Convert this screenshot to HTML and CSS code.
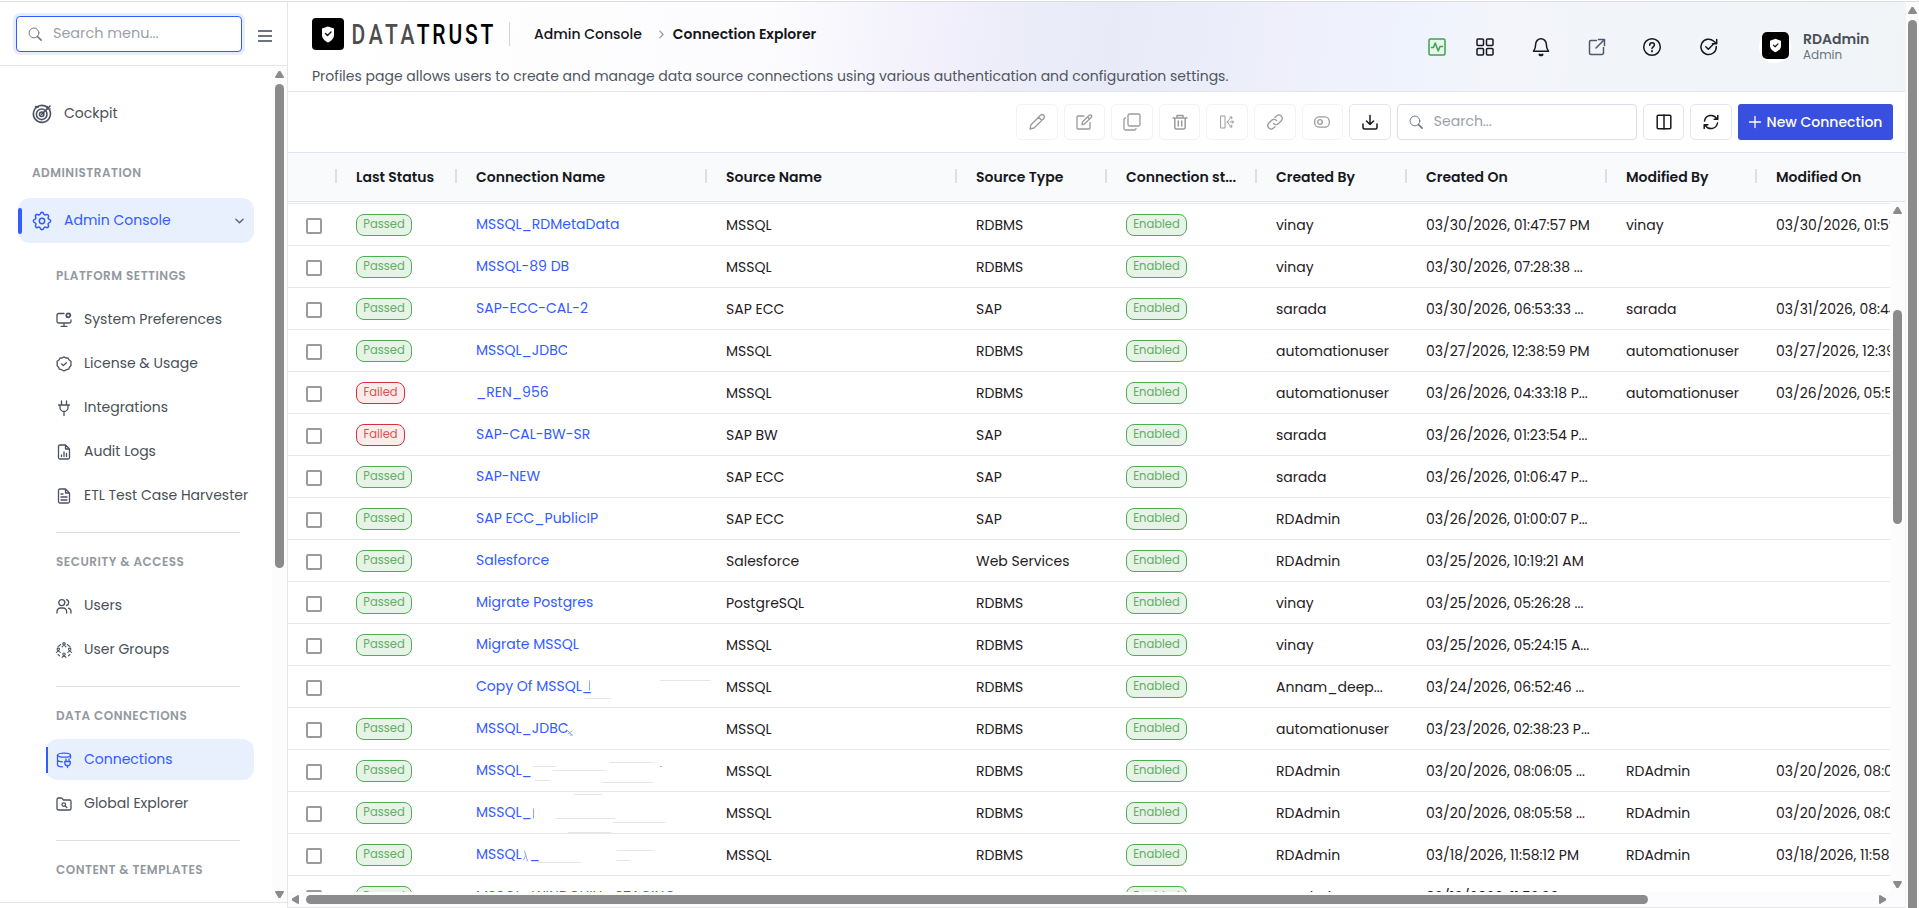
FILE: index.html
```html
<!DOCTYPE html>
<html lang="en">
<head>
	<meta charset="utf-8">
	<title>Connection Explorer</title>
	<link rel="stylesheet" href="styles.css">
</head>
<body>
<div class="app">

	<aside class="sidebar">
		<div class="menu_search">
			<div class="search_box focused">
				<svg class="ico16" viewBox="0 0 16 16"><circle cx="6.8" cy="6.8" r="5.6"/><path d="M10.8 10.8L15 15" stroke-width="1.8"/></svg>
				<span class="ph">Search menu...</span>
			</div>
			<div class="burger"><i></i><i></i><i></i></div>
		</div>

		<div class="side_body">
			<nav class="menu">
				<a class="item top cockpit">
					<svg class="ico20" viewBox="0 0 20 20"><path d="M15.2 3.2A8.5 8.5 0 1 0 17.6 6.2" stroke-width="1.6"/><path d="M3.5 2.5L6 3.3" stroke-width="1.6"/><circle cx="9.7" cy="10.3" r="5.3"/><circle cx="9.7" cy="10.3" r="2.2"/><path d="M9.7 10.3L18 2M15 5V2.5M15 5h3"/></svg>
					<span>Cockpit</span>
				</a>
				<h4 class="caption">ADMINISTRATION</h4>
				<a class="item top active">
					<svg class="ico20" viewBox="1.5 1.5 21 21"><path d="M10.3 4.3c.4-1.8 3-1.8 3.4 0a1.7 1.7 0 0 0 2.6 1.1c1.5-.9 3.3.8 2.4 2.4a1.7 1.7 0 0 0 1 2.5c1.8.4 1.8 3 0 3.4a1.7 1.7 0 0 0-1 2.6c.9 1.5-.8 3.3-2.4 2.4a1.7 1.7 0 0 0-2.6 1c-.4 1.800-3 1.800-3.400 0a1.700 1.700 0 0 0-2.600-1c-1.500.9-3.300-.8-2.400-2.400a1.700 1.700 0 0 0-1-2.600c-1.800-.4-1.800-3 0-3.400a1.700 1.700 0 0 0 1-2.600c-.9-1.500.8-3.300 2.400-2.400 1 .6 2.300.1 2.600-1z"/><circle cx="12" cy="12" r="2.800"/></svg>
					<span>Admin Console</span>
					<svg class="chev" viewBox="0 0 10 6"><path d="M1 1l4 4 4-4"/></svg>
				</a>

				<h4 class="group">PLATFORM SETTINGS</h4>
				<a class="item">
					<svg class="ico16" viewBox="0 0 16 16"><path d="M8 1.500H2.500a1.500 1.500 0 0 0-1.500 1.500v6.500A1.500 1.500 0 0 0 2.500 11h11a1.500 1.500 0 0 0 1.500-1.500V8M8 11v3M5 14.300h6"/><circle cx="12.300" cy="3.300" r="2" stroke-width="1.800"/></svg>
					<span>System Preferences</span>
				</a>
				<a class="item">
					<svg class="ico16" viewBox="0 0 16 16"><path d="M8 .9l1.900 1.100 2.200.1 1 1.900 1.900 1.200-.1 2.200.1 2.200-1.500 1.600-.8 2-2.200.5L8 15l-2.400-1.300-2.200-.5-.8-2L1.100 9.600 1.200 7.400 1.100 5.200 3 4l1-1.900 2.100-.1z"/><path d="M5.700 8l1.600 1.600 3-2.900"/></svg>
					<span>License &amp; Usage</span>
				</a>
				<a class="item">
					<svg class="ico16" viewBox="0 0 16 16"><path d="M5.500 1v4M10.500 1v4M2.500 5h11M4 5v2.500a4 4 0 0 0 8 0V5M8 11.500V15.500"/></svg>
					<span>Integrations</span>
				</a>
				<a class="item">
					<svg class="ico16" viewBox="0 0 16 16"><path d="M9.500 1H4a1.500 1.500 0 0 0-1.500 1.500v11A1.500 1.500 0 0 0 4 15h8a1.500 1.500 0 0 0 1.500-1.500V5zM9.500 1v4h4M5.500 12.500v-1.500M8 12.500V8M10.500 12.500v-3"/></svg>
					<span>Audit Logs</span>
				</a>
				<a class="item">
					<svg class="ico16" viewBox="0 0 16 16"><path d="M9.500 1H4a1.500 1.500 0 0 0-1.500 1.500v11A1.500 1.500 0 0 0 4 15h8a1.500 1.500 0 0 0 1.500-1.500V5zM9.500 1v4h4M5 6h2M5 9h6M5 12h6"/></svg>
					<span>ETL Test Case Harvester</span>
				</a>
				<hr>

				<h4 class="group">SECURITY &amp; ACCESS</h4>
				<a class="item">
					<svg class="ico16" viewBox="0 0 16 16"><circle cx="5.800" cy="4.600" r="3"/><path d="M1 15v-1.500a3.500 3.500 0 0 1 3.500-3.500h2.600a3.500 3.500 0 0 1 3.500 3.500V15M10.500 1.700a3 3 0 0 1 0 5.800M15 15v-1.500a3.500 3.500 0 0 0-2.500-3.300"/></svg>
					<span>Users</span>
				</a>
				<a class="item">
					<svg class="ico16 thin" viewBox="0 0 16 16"><path d="M3.200 3.800l1.400-1.300M11.400 2.500l1.400 1.300M1.800 5l.5-.8M14.200 5l-.5-.8M2.200 12.500l1.400 1.400M13.800 12.500l-1.400 1.400"/><circle cx="8" cy="1.800" r="1.200"/><circle cx="2.300" cy="7.300" r="1.200"/><circle cx="13.700" cy="7.300" r="1.200"/><circle cx="8" cy="12.200" r="1.200"/><path d="M6 4.800q2-2.600 4 0M.3 10.500q2-2.600 4 0M11.700 10.500q2-2.600 4 0M6 15.400q2-2.600 4 0"/></svg>
					<span>User Groups</span>
				</a>
				<hr>

				<h4 class="group">DATA CONNECTIONS</h4>
				<a class="item active">
					<svg class="ico16" viewBox="0 0 16 16"><ellipse cx="8" cy="3.200" rx="6.500" ry="2"/><path d="M1.500 3.200v9.500c0 1.200 2 2 5 2.100M1.500 8c.5 1.200 2.500 1.800 5 1.900M14.500 3.200V6M10 7v2.500M13 7v2.500M8.800 9.500h5.500v1.500a2.700 2.700 0 0 1-5.500 0zM11.500 13.500v2"/></svg>
					<span>Connections</span>
				</a>
				<a class="item">
					<svg class="ico16" viewBox="0 0 16 16"><path d="M1 3.500A1.500 1.500 0 0 1 2.500 2H5.500l2 2h6A1.500 1.500 0 0 1 15 5.500v7A1.500 1.500 0 0 1 13.500 14h-11A1.500 1.500 0 0 1 1 12.500z"/><circle cx="7.800" cy="8.600" r="1.800"/><path d="M9.200 10l1.600 1.500"/></svg>
					<span>Global Explorer</span>
				</a>
				<hr>
				<h4 class="group">CONTENT &amp; TEMPLATES</h4>
			</nav>
			<div class="vbar side_bar"><b class="up"></b><i></i><b class="down"></b></div>
		</div>
	</aside>

	<main class="main">
		<header class="header">
			<div class="head_left">
				<div class="brand_row">
					<svg class="logo" viewBox="0 0 32 32"><rect width="32" height="32" rx="4"/><path class="w" d="M16 8.500l6 2v6.500c0 3.500-3 6-6 7.500-3-1.500-6-4-6-7.500v-6.500z"/><path class="tick" d="M13.500 15.500l2 2 3.500-3.500"/></svg>
					<svg class="wordmark" viewBox="0 0 140 32"><g transform="scale(.75 1)"><text x="-2" y="26" textLength="84" class="wm_data">DATA</text><text x="85" y="26" textLength="102" class="wm_trust">TRUST</text></g></svg>
					<span class="vline"></span>
					<span class="crumb">Admin Console</span>
					<svg class="sep" viewBox="0 0 6 10"><path d="M1 1l4 4-4 4"/></svg>
					<span class="crumb current">Connection Explorer</span>
				</div>
				<p class="desc">Profiles page allows users to create and manage data source connections using various authentication and configuration settings.</p>
			</div>
			<div class="head_icons">
				<svg class="h_green" viewBox="0 0 18 18"><rect x="1" y="1" width="16" height="16" rx="1.500"/><path d="M3.500 9.500h2l1.700-4.500 3 8 1.800-4.500h2.500"/></svg>
				<svg class="h_grid" viewBox="0 0 18 18"><rect x="1" y="1" width="6.500" height="6.500" rx="1"/><rect x="10.500" y="1" width="6.500" height="6.500" rx="1"/><rect x="1" y="10.500" width="6.500" height="6.500" rx="1"/><rect x="10.500" y="10.500" width="6.500" height="6.500" rx="1"/></svg>
				<svg class="h_bell" viewBox="0 0 18 18"><path d="M9 .8a5.300 5.300 0 0 0-5.300 5.300c0 4-.9 5.700-2.200 7.200h15c-1.300-1.500-2.200-3.200-2.200-7.200A5.300 5.300 0 0 0 9 .8z"/><path d="M7.500 16.600q1.500 1.200 3 0" stroke-width="2"/></svg>
				<svg class="h_ext" viewBox="0 0 18 18"><path d="M8.500 2.500H3A1.500 1.500 0 0 0 1.500 4v11A1.500 1.500 0 0 0 3 16.500h11a1.500 1.500 0 0 0 1.500-1.500V9.500M10.500 1.500h6v6M16.500 1.500L8 10"/></svg>
				<svg class="h_help" viewBox="0 0 18 18"><circle cx="9" cy="9" r="8.300"/><path d="M6.700 7.200c0-3.200 4.700-3 4.700-.2 0 1.700-2.400 1.900-2.400 3.600"/><path d="M9 12.800v.6" stroke-width="1.800"/></svg>
				<svg class="h_check" viewBox="0 0 18 18"><path d="M16.300 8.500A7.700 7.700 0 1 1 13.800 3.200L16.500 5.500M16.700 1.500v4.200h-4.200M5.800 8.800l2.500 2.500 5-5"/></svg>
				<div class="avatar"><svg viewBox="0 0 32 32"><rect width="32" height="32" rx="6"/><path class="w" d="M16 8l6.500 2.500v6c0 3.500-3.200 6-6.500 7.500-3.200-1.500-6.500-4-6.500-7.500v-6z"/><path class="tick" d="M13.500 15.500l2 2 3.500-3.500"/></svg></div>
				<div class="user"><b>RDAdmin</b><small>Admin</small></div>
			</div>
		</header>

		<div class="toolbar">
			<div class="btn off"><svg class="ico16" viewBox="0 0 16 16"><path d="M1 15l1-4.200L11.500 1.300a1.800 1.800 0 0 1 3.200 3.200L5 14zM9.800 3.200l3 3"/></svg></div>
			<div class="btn off"><svg class="ico16" viewBox="0 0 16 16"><path d="M8 2H2a1 1 0 0 0-1 1v11a1 1 0 0 0 1 1h11a1 1 0 0 0 1-1V8.500M6 10.500l.6-2.800L13.300 1.200a1.300 1.300 0 0 1 2 2L8.700 9.800zM11.500 3l1.800 1.800"/></svg></div>
			<div class="btn off"><svg class="ico18" viewBox="0 0 18 18"><rect x="5" y="1" width="12" height="12" rx="1.500"/><path d="M2.500 5A1.500 1.500 0 0 0 1 6.500v9A1.500 1.500 0 0 0 2.500 17h9a1.500 1.500 0 0 0 1.500-1.500"/></svg></div>
			<div class="btn off bold"><svg class="ico16" viewBox="0 0 16 16"><path d="M1 4h14M2.800 4v9.500A1.500 1.500 0 0 0 4.300 15h7.400a1.500 1.500 0 0 0 1.500-1.500V4M5 4V1.500h6V4M6.300 7v5M9.700 7v5"/></svg></div>
			<div class="btn off light"><svg class="ico16" viewBox="0 0 16 16"><path d="M2 2h4v12H2zM8 8h1.500M11 8h3.500M8.500 7.500L12 3.500M8.500 8.500L12 12.500M10.800 3.200l2-.4v2M10.800 12.800l2 .4v-2M13 6.500L14.500 8 13 9.500"/></svg></div>
			<div class="btn off"><svg class="ico16" viewBox="0 0 16 16"><path d="M6.500 9.500a3.300 3.300 0 0 0 4.800.2l3-3a3.400 3.400 0 0 0-4.800-4.800L8 3.300M9.500 6.500a3.300 3.300 0 0 0-4.800-.2l-3 3a3.400 3.400 0 0 0 4.800 4.800L8 12.700"/></svg></div>
			<div class="btn off"><svg class="ico16" viewBox="0 0 16 16"><rect x=".7" y="2.800" width="14.600" height="10.400" rx="4.500"/><circle cx="6" cy="8" r="2.300"/></svg></div>
			<div class="btn bold"><svg class="ico16" viewBox="0 0 16 16"><path d="M1 10v3.500A1.500 1.500 0 0 0 2.500 15h11a1.500 1.500 0 0 0 1.500-1.500V10M8 1.500v9M4.500 7L8 10.500 11.500 7"/></svg></div>
			<div class="search_box grid_search">
				<svg class="ico16" viewBox="0 0 16 16"><circle cx="6.800" cy="6.800" r="5.600"/><path d="M10.800 10.800L15 15" stroke-width="1.800"/></svg>
				<span class="ph">Search...</span>
			</div>
			<div class="btn bold"><svg class="ico16" viewBox="0 0 16 16"><rect x="1.200" y="1.200" width="13.600" height="13.600" rx="1"/><path d="M8 1v14"/></svg></div>
			<div class="btn bold"><svg class="ico16" viewBox="0 0 16 16"><path d="M1.500 7A6.600 6.600 0 0 1 13.700 4.700M14.800 1.500v3.700h-3.700M14.500 9A6.600 6.600 0 0 1 2.300 11.300M1.200 14.500v-3.700h3.700"/></svg></div>
			<div class="new_btn"><svg viewBox="0 0 12 12"><path d="M6 .5v11M.5 6h11"/></svg><span>New Connection</span></div>
		</div>

		<section class="grid">
			<div class="row grid_head">
				<div></div><div>Last Status</div><div>Connection Name</div><div>Source Name</div><div>Source Type</div><div>Connection st...</div><div>Created By</div><div>Created On</div><div>Modified By</div><div>Modified On</div>
			</div>
			<div class="grid_mid">
				<div class="rows" id="rows"></div>
				<div class="vbar grid_bar"><b class="up"></b><i></i><b class="down"></b></div>
			</div>
			<div class="hbar"><b class="left"></b><i></i><b class="right"></b></div>
		</section>
	</main>

	<div class="vbar page_bar"><b class="up"></b><i></i></div>
</div>
<script src="script.js"></script>
</body>
</html>
```
FILE: styles.css
```css
* {
	box-sizing: border-box;
}

body {
	margin: 0;
	background: #fff;
	font-family: Poppins, Inter, sans-serif;
	font-size: 14px;
	color: #1f2024;
	overflow: hidden;
}

svg {
	display: block;
	flex: none;
	fill: none;
	stroke: currentColor;
	stroke-width: 1.3;
	stroke-linecap: round;
	stroke-linejoin: round;
	overflow: visible;
}

.ico16 { width: 16px; height: 16px; }
.ico18 { width: 18px; height: 18px; }
.ico20 { width: 20px; height: 20px; }
.thin { stroke-width: 1.1; }

.app {
	display: flex;
	height: 908px;
	padding-top: 1px;
}

.app > * {
	border-top: 1px solid #dcdcdc;
}

/* sidebar */
.sidebar {
	width: 288px;
	flex: none;
	border-right: 1px solid #e6e6e8;
	display: flex;
	flex-direction: column;
}

.menu_search {
	height: 64px;
	display: flex;
	align-items: flex-start;
	padding: 14px 0 0 16px;
	border-bottom: 1px solid #e6e6e8;
}

.search_box {
	height: 36px;
	display: flex;
	align-items: center;
	gap: 11px;
	padding-left: 11px;
	border: 1px solid #dcdfe6;
	border-radius: 4px;
	background: #fff;
	color: #6c757d;
}

.search_box svg { width: 14px; height: 14px; stroke-width: 1.1; }

.search_box.focused {
	width: 226px;
	border-color: #335cff;
	box-shadow: 0 0 0 3px #e6edfd;
}

.ph {
	color: #9a9fa8;
	margin-top: -1px;
}

.focused .ph { font-size: 14.4px; margin-top: -2px; }

.burger {
	margin: 14px 0 0 16px;
	width: 14px;
}

.burger i {
	display: block;
	height: 2px;
	margin-bottom: 3px;
	background: #6c757d;
}

.side_body {
	display: flex;
	height: 837px;
	border-bottom: 1px solid #e6e6e8;
}

.menu {
	flex: 1;
	overflow: hidden;
	padding: 25px 0 0 18px;
}

.item {
	display: flex;
	align-items: center;
	gap: 12px;
	position: relative;
	width: 208px;
	height: 41px;
	margin: 0 0 3px 28px;
	padding-left: 10px;
	border-radius: 12px;
	color: #495057;
	white-space: nowrap;
}

.item svg { color: #4a5160; }

.item span { margin-top: -1px; }

.item.top {
	width: 236px;
	height: 45px;
	margin: 0 0 4px;
	padding-left: 14px;
}

.item.active {
	background: #e8effd;
	color: #335cff;
}

.item.active svg { color: #335cff; }

.item.active::before {
	content: "";
	position: absolute;
	left: 0;
	top: 8px;
	width: 2px;
	height: 26px;
	background: #335cff;
}

.item.top svg { stroke-width: 1.6; }

.item.top.active::before {
	top: 10px;
	width: 4px;
	border-radius: 2px;
}

.item.active .chev {
	width: 9px;
	height: 6px;
	margin: 1px 10px 0 auto;
	color: #5d6472;
}

.caption, .group {
	margin: 0;
	font-size: 12px;
	font-weight: 600;
	letter-spacing: 0.5px;
	color: #9299a0;
}

.caption {
	height: 58px;
	padding: 25px 0 0 14px;
	line-height: 16px;
}

.group {
	height: 52px;
	padding: 21px 0 0 38px;
	line-height: 16px;
}

.menu hr {
	width: 184px;
	height: 1px;
	margin: 16px 0 0 38px;
	border: 0;
	background: #dcdee0;
}

/* scrollbars */
.vbar {
	display: flex;
	flex-direction: column;
	align-items: center;
	flex: none;
	width: 15px;
	padding-top: 5px;
	background: #fcfcfc;
}

.vbar b, .hbar b {
	flex: none;
	background: #8b8b8b;
}

.vbar b {
	width: 9px;
	height: 7px;
}

.up { clip-path: polygon(40% 0, 60% 0, 100% 85%, 95% 100%, 5% 100%, 0 85%); }
.down { clip-path: polygon(5% 0, 95% 0, 100% 15%, 60% 100%, 40% 100%, 0 15%); }
.left { clip-path: polygon(0 40%, 85% 0, 100% 5%, 100% 95%, 85% 100%, 0 60%); }
.right { clip-path: polygon(100% 40%, 15% 0, 0 5%, 0 95%, 15% 100%, 100% 60%); }

.vbar i {
	width: 9px;
	border-radius: 5px;
	background: #8b8b8b;
}

.side_bar i { height: 484px; margin-top: 6px; }
.side_bar .down, .grid_bar .down { margin: auto 0 4px; }

.page_bar {
	width: 14px;
	border-left: 1px solid #f4f4f4;
}

.page_bar i {
	height: 900px;
	flex: none;
	margin-top: 6px;
}

/* header */
.main {
	width: 1617px;
	flex: none;
}

.header {
	display: flex;
	justify-content: space-between;
	height: 90px;
	padding-left: 24px;
	border-bottom: 1px solid #e4e5ec;
	background: linear-gradient(97deg, #fff 0%, #fcfcfe 30%, #f0effb 41%, #e8eaf8 51%, #eeeffb 61%, #eff3fd 70%, #f3f5fa 74%, #f0f4f7 100%);
}

.brand_row {
	display: flex;
	align-items: center;
	height: 32px;
	margin-top: 16px;
}

.logo { width: 32px; height: 32px; }

.logo rect, .avatar rect { fill: #000; stroke: none; }
.w { fill: #fff; stroke: none; }
.tick { stroke: #111; stroke-width: 1.4; }

.wordmark {
	width: 140px;
	height: 32px;
	margin-left: 9px;
	stroke: none;
	font-family: Roboto, sans-serif;
	font-size: 28px;
	font-weight: 500;
}

.wm_data { fill: #4d4d4d; }
.wm_trust { fill: #000; }

.vline {
	width: 1px;
	height: 24px;
	margin: 0 24px 0 16px;
	background: #d3d5da;
}

.crumb {
	font-weight: 500;
	color: #14151a;
	white-space: nowrap;
}

.sep {
	width: 5px;
	height: 9px;
	margin: 0 9px 0 17px;
	color: #8d92a0;
}

.crumb.current { font-weight: 600; }

.desc {
	margin: 17px 0 0;
	line-height: 18px;
	color: #4f5661;
	white-space: nowrap;
}

.head_icons {
	display: flex;
	align-items: center;
	width: 477px;
	color: #16181d;
}

.head_icons > svg { width: 18px; height: 18px; stroke-width: 1.5; }
.head_icons .h_green { color: #3da44d; background: #e9f6ec; }
.h_grid { margin-left: 30px; }
.h_bell { margin-left: 38px; }
.head_icons .h_ext { margin-left: 38px; color: #4f586b; }
.h_help { margin-left: 37px; }
.h_check { margin-left: 39px; }

.avatar {
	display: flex;
	align-items: center;
	justify-content: center;
	width: 32px;
	height: 32px;
	margin: 0 0 0 41px;
	border-radius: 50%;
	background: #fff;
}

.avatar svg { width: 27px; height: 27px; margin-top: -3px; }

.user {
	display: flex;
	flex-direction: column;
	margin-left: 12px;
	line-height: 16px;
	color: #4a5059;
}

.user b { font-weight: 600; }
.user small { font-size: 12px; color: #6c757d; }

/* toolbar */
.toolbar {
	display: flex;
	justify-content: flex-end;
	gap: 6px;
	height: 61px;
	padding: 12px 12px 0 0;
	border-bottom: 1px solid #e2e5ee;
}

.btn {
	display: flex;
	align-items: center;
	justify-content: center;
	width: 41.6px;
	height: 36px;
	border: 1px solid #e4e5ee;
	border-radius: 5px;
	color: #16181d;
}

.btn.bold svg { stroke-width: 1.5; }
.btn.light svg { stroke-width: 1; }

.btn.off {
	border-color: #f3f3f7;
	color: #9b9b9d;
}

.grid_search { width: 240px; }

.new_btn {
	display: flex;
	align-items: center;
	justify-content: center;
	gap: 6px;
	width: 155px;
	height: 36px;
	border-radius: 3px;
	background: #394fdf;
	color: #fff;
	font-weight: 500;
	white-space: nowrap;
}

.new_btn svg { width: 12px; height: 12px; }

/* grid */
.row {
	display: grid;
	grid-template-columns: 48px 120px 250px 250px 150px 150px 150px 200px 150px 200px;
	align-items: center;
	height: 42px;
	padding-top: 2px;
	border-bottom: 1px solid #e8e8ea;
}

.row > div {
	padding-left: 20px;
	white-space: nowrap;
}

.row > .link {
	position: relative;
	margin-top: -3px;
	color: #335cff;
}

.row.grid_head {
	height: 49px;
	padding-top: 0;
	overflow: hidden;
	border-color: #e2e5ee;
	background: #f8fafc;
}

.grid_head > div {
	position: relative;
	font-weight: 600;
	line-height: 20px;
	color: #17181c;
}

.grid_head > div + div::before {
	content: "";
	position: absolute;
	left: -1px;
	top: 2px;
	width: 2px;
	height: 14px;
	background: #dddeec;
}

.grid_mid {
	display: flex;
	height: 690px;
}

.rows {
	width: 1602px;
	margin-top: 1px;
	overflow: hidden;
	border-top: 1px solid #e8e8ea;
}

.row .check { padding: 0 0 0 18px; }

.check i {
	display: block;
	width: 16px;
	height: 16px;
	border: 2px solid #9b9b9d;
	border-radius: 2px;
}

.badge {
	display: inline-block;
	height: 22px;
	margin-top: -1px;
	border: 1px solid #4caf50;
	border-radius: 8px;
	background: #e8f3e8;
	color: #5fae63;
	font-size: 11.5px;
	line-height: 19px;
	text-align: center;
	vertical-align: middle;
}

.passed { width: 56px; }
.enabled { width: 61px; }

.failed {
	width: 49px;
	border-color: #d32f3f;
	background: #fceceb;
	color: #d9534f;
}

/* names hidden past the given width */
.cut {
	display: inline-block;
	overflow: hidden;
	vertical-align: bottom;
}

.gap { margin-left: 8px; }

/* leftovers of masked names */
.marks {
	position: absolute;
	left: 0;
	top: -9px;
	width: 250px;
	height: 42px;
	stroke: #e6e6e8;
	stroke-width: 1;
}

.marks .ink { stroke: #8fa3fb; }

.grid_bar i { height: 214px; margin-top: 96px; }

.hbar {
	display: flex;
	align-items: center;
	height: 16px;
	padding: 0 19px 0 4px;
	border-bottom: 1px solid #e6e6e8;
	background: #fcfcfc;
}

.hbar b { width: 7px; height: 9px; }

.hbar i {
	width: 1342px;
	height: 9px;
	margin-left: 7px;
	border-radius: 5px;
	background: #8b8b8b;
}

.hbar .right { margin-left: auto; }
```
FILE: script.js
```js
// status, name, source, type, created by, created on, modified by, modified on, visible name width
var connections = [
	['Passed', 'MSSQL_RDMetaData', 'MSSQL', 'RDBMS', 'vinay', '03/30/2026, 01:47:57 PM', 'vinay', '03/30/2026, 01:59'],
	['Passed', 'MSSQL-89 DB', 'MSSQL', 'RDBMS', 'vinay', '03/30/2026, 07:28:38 ...', '', ''],
	['Passed', 'SAP-ECC-CAL-2', 'SAP ECC', 'SAP', 'sarada', '03/30/2026, 06:53:33 ...', 'sarada', '03/31/2026, 08:44'],
	['Passed', 'MSSQL_JDBC', 'MSSQL', 'RDBMS', 'automationuser', '03/27/2026, 12:38:59 PM', 'automationuser', '03/27/2026, 12:39', 91],
	['Failed', '_REN_956', 'MSSQL', 'RDBMS', 'automationuser', '03/26/2026, 04:33:18 P...', 'automationuser', '03/26/2026, 05:5'],
	['Failed', 'SAP-CAL-BW-SR', 'SAP BW', 'SAP', 'sarada', '03/26/2026, 01:23:54 P...', '', ''],
	['Passed', 'SAP-NEW', 'SAP ECC', 'SAP', 'sarada', '03/26/2026, 01:06:47 P...', '', ''],
	['Passed', 'SAP ECC_PublicIP', 'SAP ECC', 'SAP', 'RDAdmin', '03/26/2026, 01:00:07 P...', '', ''],
	['Passed', 'Salesforce', 'Salesforce', 'Web Services', 'RDAdmin', '03/25/2026, 10:19:21 AM', '', ''],
	['Passed', 'Migrate Postgres', 'PostgreSQL', 'RDBMS', 'vinay', '03/25/2026, 05:26:28 ...', '', ''],
	['Passed', 'Migrate MSSQL', 'MSSQL', 'RDBMS', 'vinay', '03/25/2026, 05:24:15 A...', '', ''],
	['', 'Copy Of MSSQL_', 'MSSQL', 'RDBMS', 'Annam_deep...', '03/24/2026, 06:52:46 ...', '', ''],
	['Passed', 'MSSQL_JDBC', 'MSSQL', 'RDBMS', 'automationuser', '03/23/2026, 02:38:23 P...', '', ''],
	['Passed', 'MSSQL_', 'MSSQL', 'RDBMS', 'RDAdmin', '03/20/2026, 08:06:05 ...', 'RDAdmin', '03/20/2026, 08:0'],
	['Passed', 'MSSQL_', 'MSSQL', 'RDBMS', 'RDAdmin', '03/20/2026, 08:05:58 ...', 'RDAdmin', '03/20/2026, 08:0'],
	['Passed', 'MSSQL<span class="gap">_</span>', 'MSSQL', 'RDBMS', 'RDAdmin', '03/18/2026, 11:58:12 PM', 'RDAdmin', '03/18/2026, 11:58'],
	['Passed', 'MSSQL_WINDCHILL_STAGING', 'MSSQL', 'RDBMS', 'RDAdmin', '03/18/2026, 11:52:36 ...', '', '']
];

// faint strokes by row: [grey path, blue path]
var marks = {
	11: ['M204 13.500h50M129 31.500h26', 'M133.500 14v9'],
	12: ['', 'M111 21l5 5M112 25l4-3M114 26h2.500'],
	13: ['M77 15.500h23M97 19.500h52M154 11.500h43M79 29.500h15M146 31.500h51', 'M204.500 15.500h1'],
	14: ['M118 1.500h28M100 25.500h59M157 29.500h52M112 39.500h43', 'M77.500 16v9'],
	15: ['M161 15.500h36M82 27.500h43M161 25.500h13', 'M68.500 16l3 10M67.500 25l2-4']
};

var html = '';
for (var i = 0; i < connections.length; i++) {
	var c = connections[i];
	var status = c[0] ? '<span class="badge ' + c[0].toLowerCase() + '">' + c[0] + '</span>' : '';
	var name = c[8] ? '<span class="cut" style="width:' + c[8] + 'px">' + c[1] + '</span>' : c[1];
	if (marks[i]) {
		name += '<svg class="marks"><path d="' + marks[i][0] + '"/><path class="ink" d="' + marks[i][1] + '"/></svg>';
	}
	html += '<div class="row"><div class="check"><i></i></div><div>' + status + '</div>' +
		'<div class="link">' + name + '</div><div>' + c[2] + '</div><div>' + c[3] + '</div>' +
		'<div><span class="badge enabled">Enabled</span></div>' +
		'<div>' + c[4] + '</div><div>' + c[5] + '</div><div>' + c[6] + '</div><div>' + c[7] + '</div></div>';
}
document.getElementById('rows').innerHTML = html;
```
